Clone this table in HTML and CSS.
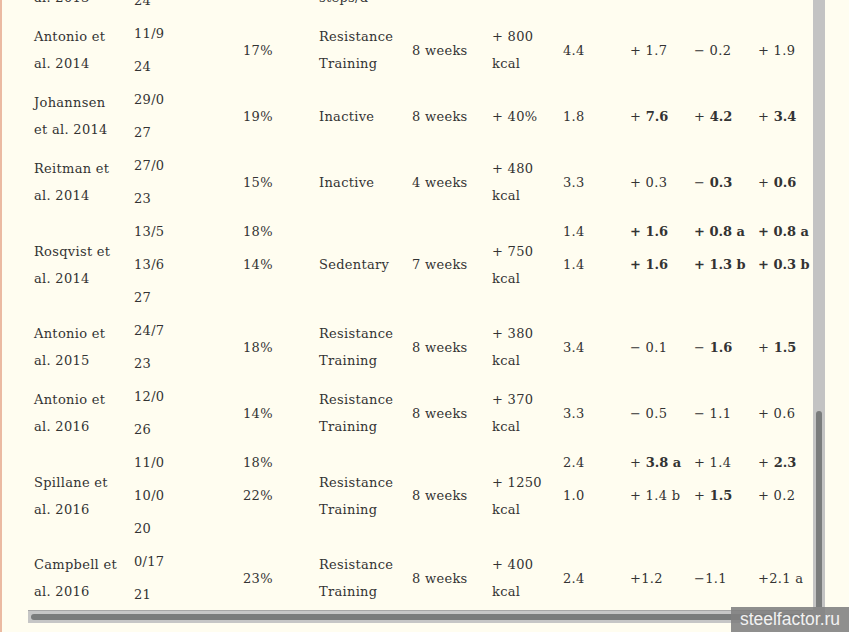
FILE: index.html
```html
<!DOCTYPE html>
<html>
<head>
<meta charset="utf-8">
<link rel="stylesheet" href="styles.css">
</head>
<body>
<div class="page">
  <div class="frame">
    <div class="viewport">
      <table class="data">
        <colgroup>
          <col class="c1"><col class="c2"><col class="c3"><col class="c4"><col class="c5">
          <col class="c6"><col class="c7"><col class="c8"><col class="c9"><col class="c10">
        </colgroup>
        <tr class="r0">
          <td class="up">al. 2013</td>
          <td class="n">24</td>
          <td></td>
          <td class="up">steps/d</td>
          <td></td><td></td><td></td><td></td><td></td><td></td>
        </tr>
        <tr>
          <td>Antonio et<br>al. 2014</td>
          <td class="n">11/9<br>24</td>
          <td>17%</td>
          <td>Resistance<br>Training</td>
          <td>8 weeks</td>
          <td>+ 800<br>kcal</td>
          <td>4.4</td>
          <td>+ 1.7</td>
          <td>− 0.2</td>
          <td>+ 1.9</td>
        </tr>
        <tr>
          <td>Johannsen<br>et al. 2014</td>
          <td class="n">29/0<br>27</td>
          <td>19%</td>
          <td>Inactive</td>
          <td>8 weeks</td>
          <td>+ 40%</td>
          <td>1.8</td>
          <td>+ <b>7.6</b></td>
          <td>+ <b>4.2</b></td>
          <td>+ <b>3.4</b></td>
        </tr>
        <tr>
          <td>Reitman et<br>al. 2014</td>
          <td class="n">27/0<br>23</td>
          <td>15%</td>
          <td>Inactive</td>
          <td>4 weeks</td>
          <td>+ 480<br>kcal</td>
          <td>3.3</td>
          <td>+ 0.3</td>
          <td>− <b>0.3</b></td>
          <td>+ <b>0.6</b></td>
        </tr>
        <tr>
          <td>Rosqvist et<br>al. 2014</td>
          <td class="n">13/5<br>13/6<br>27</td>
          <td class="top">18%<br>14%</td>
          <td>Sedentary</td>
          <td>7 weeks</td>
          <td>+ 750<br>kcal</td>
          <td class="top">1.4<br>1.4</td>
          <td class="top"><b>+ 1.6<br>+ 1.6</b></td>
          <td class="top"><b>+ 0.8 a<br>+ 1.3 b</b></td>
          <td class="top"><b>+ 0.8 a<br>+ 0.3 b</b></td>
        </tr>
        <tr>
          <td>Antonio et<br>al. 2015</td>
          <td class="n">24/7<br>23</td>
          <td>18%</td>
          <td>Resistance<br>Training</td>
          <td>8 weeks</td>
          <td>+ 380<br>kcal</td>
          <td>3.4</td>
          <td>− 0.1</td>
          <td>− <b>1.6</b></td>
          <td>+ <b>1.5</b></td>
        </tr>
        <tr>
          <td>Antonio et<br>al. 2016</td>
          <td class="n">12/0<br>26</td>
          <td>14%</td>
          <td>Resistance<br>Training</td>
          <td>8 weeks</td>
          <td>+ 370<br>kcal</td>
          <td>3.3</td>
          <td>− 0.5</td>
          <td>− 1.1</td>
          <td>+ 0.6</td>
        </tr>
        <tr>
          <td>Spillane et<br>al. 2016</td>
          <td class="n">11/0<br>10/0<br>20</td>
          <td class="top">18%<br>22%</td>
          <td>Resistance<br>Training</td>
          <td>8 weeks</td>
          <td>+ 1250<br>kcal</td>
          <td class="top">2.4<br>1.0</td>
          <td class="top">+ <b>3.8 a</b><br>+ 1.4 b</td>
          <td class="top">+ 1.4<br>+ <b>1.5</b></td>
          <td class="top">+ <b>2.3</b><br>+ 0.2</td>
        </tr>
        <tr>
          <td>Campbell et<br>al. 2016</td>
          <td class="n">0/17<br>21</td>
          <td>23%</td>
          <td>Resistance<br>Training</td>
          <td>8 weeks</td>
          <td>+ 400<br>kcal</td>
          <td>2.4</td>
          <td>+1.2</td>
          <td>−1.1</td>
          <td>+2.1 a</td>
        </tr>
      </table>
    </div>
    <div class="vbar"><div class="vspace"></div><div class="vthumb"></div></div>
    <div class="hbar"><div class="hthumb"></div></div>
    <div class="corner"></div>
  </div>
</div>
<div class="watermark">steelfactor.ru</div>
</body>
</html>
```
FILE: styles.css
```css
html, body {
  margin: 0;
  padding: 0;
  background: #fffdf0;
}
body {
  width: 849px;
  height: 632px;
  overflow: hidden;
  position: relative;
  font-family: "DejaVu Serif", "Liberation Serif", serif;
  color: #333333;
}
.page {
  height: 632px;
  border-left: 2px solid #ebbaa2;
  padding-left: 26px;
  box-sizing: border-box;
}
.frame {
  display: grid;
  grid-template-columns: 785px 12px;
  grid-template-rows: 610px 13px;
}
.viewport {
  overflow: hidden;
}
.data {
  border-collapse: collapse;
  table-layout: fixed;
  width: 794px;
  margin-top: -16px;
  font-size: 13px;
  letter-spacing: 0.3px;
}
.c1 { width: 100px; }
.c2 { width: 109px; }
.c3 { width: 76px; }
.c4 { width: 93px; }
.c5 { width: 80px; }
.c6 { width: 71px; }
.c7 { width: 67px; }
.c8 { width: 64px; }
.c9 { width: 64px; }
.c10 { width: 70px; }
.data td {
  padding: 0 0 0 6px;
  line-height: 27px;
  vertical-align: middle;
  white-space: nowrap;
  text-align: left;
}
.data td.n {
  line-height: 33px;
}
.data td.top {
  line-height: 33px;
  vertical-align: top;
}
.data td.up {
  padding-bottom: 6px;
}
.data b {
  font-weight: bold;
  letter-spacing: 0;
}
.vbar {
  background: #c3c3c3;
  display: flex;
  flex-direction: column;
  align-items: center;
}
.vspace {
  height: 411px;
  flex: none;
}
.vthumb {
  width: 6px;
  height: 196px;
  background: #7a7c7c;
  border-radius: 3px 3px 0 0;
}
.hbar {
  background: #c6c6c6;
  border-top: 1px solid #a6a6a6;
  display: flex;
  align-items: center;
  padding-left: 3px;
}
.hthumb {
  width: 777px;
  height: 6px;
  background: #7a7c7c;
  border-radius: 3px;
}
.corner {
  background: #c3c3c3;
}
.watermark {
  position: absolute;
  right: 0;
  bottom: 0;
  width: 118px;
  height: 25px;
  background: rgba(128, 128, 128, 0.88);
  color: #f2f2f2;
  font-family: "Liberation Sans", Arial, sans-serif;
  font-size: 17.5px;
  line-height: 25px;
  text-align: center;
}
```
